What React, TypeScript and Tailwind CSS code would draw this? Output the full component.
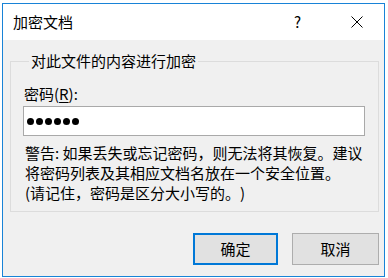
export default function App() {
  const font = { fontFamily: '"Noto Sans CJK SC", "Noto Sans", sans-serif' };
  return (
    <div className="w-[388px] h-[278px] bg-white overflow-hidden [text-spacing-trim:space-all]" style={font}>
      <div className="ml-[2px] mt-[3px] w-[383px] h-[274px] border border-[#1883d7] flex flex-col text-black">
        {/* title bar */}
        <div className="h-[36px] bg-white flex items-center shrink-0">
          <span className="ml-[10px] text-[15px] leading-[20px]">加密文档</span>
          <span className="ml-auto text-[15px] leading-[20px] mr-[50px]">?</span>
          <svg width="12" height="12" viewBox="0 0 12 12" className="mr-[21px]">
            <path d="M0.5 0.5 L11.5 11.5 M11.5 0.5 L0.5 11.5" stroke="#000" strokeWidth="1" fill="none" />
          </svg>
        </div>

        {/* body */}
        <div className="flex-1 bg-[#f0f0f0] flex flex-col">
          <fieldset className="mt-[11px] ml-[7px] mr-[5px] border border-[#dcdcdc] pl-[12px] pr-[12px] pb-[8px]">
            <legend className="ml-[6px] px-[2px] text-[15px] leading-[20px]">对此文件的内容进行加密</legend>
            <div className="mt-[13px] text-[15px] leading-[20px] pl-[1px]">
              密码(<span className="underline underline-offset-2">R</span>):
            </div>
            <div className="mt-[2px] w-[342px] h-[30px] bg-white border border-[#a9a9a9] flex items-center pl-[3px] gap-[2px]">
              {[0, 1, 2, 3, 4, 5].map((i) => (
                <span key={i} className="w-[7px] h-[7px] rounded-full bg-black" />
              ))}
            </div>
            <p className="mt-[7px] text-[15px] leading-[20px] pl-[2px]">
              警告: 如果丢失或忘记密码，则无法将其恢复。建议
              <br />
              将密码列表及其相应文档名放在一个安全位置。
              <br />
              (请记住，密码是区分大小写的。)
            </p>
          </fieldset>

          <div className="mt-[21px] mr-[5px] flex justify-end gap-[14px]">
            <button className="w-[85px] h-[32px] bg-[#e1e1e1] border-2 border-[#0078d7] text-[15px] leading-[20px]">
              确定
            </button>
            <button className="w-[87px] h-[32px] bg-[#e1e1e1] border border-[#adadad] text-[15px] leading-[20px]">
              取消
            </button>
          </div>
        </div>
      </div>
    </div>
  );
}
